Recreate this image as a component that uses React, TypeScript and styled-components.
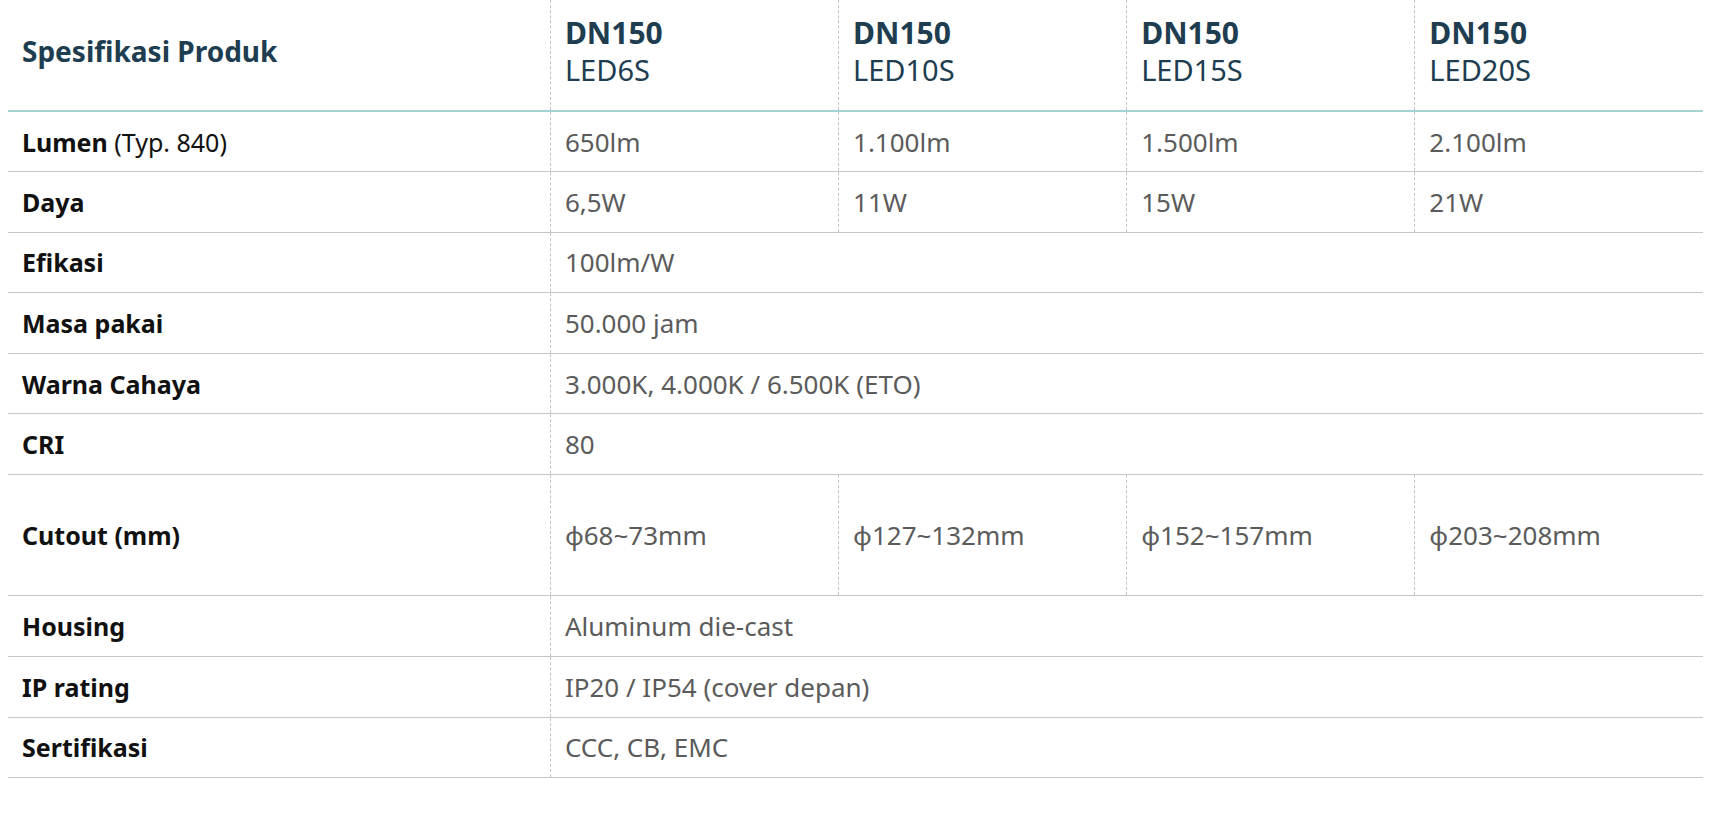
import styled, { createGlobalStyle } from "styled-components"

const GlobalStyle = createGlobalStyle`
    body {
        margin: 0 0 8px 8px;
        background: #ffffff;
        font-family: "Noto Sans", "Open Sans", Arial, sans-serif;
    }
`

const SpecTable = styled.table`
    width: 1695px;
    border-collapse: collapse;
    table-layout: fixed;
`

const Col = styled.col<{ $width: string }>`
    width: ${p => p.$width};
`

const HeadRow = styled.tr`
    border-bottom: 2px solid #a4d3d1;
`

const HeadCell = styled.th<{ $dashed?: boolean }>`
    text-align: left;
    vertical-align: middle;
    padding: 14px 14px 22px;
    font-weight: 400;
    color: #1e3d50;
    border-left: ${p => (p.$dashed ? "1px dashed #c4c4c4" : "none")};
`

const Title = styled.span`
    font-size: 28px;
    font-weight: 700;
    line-height: 37px;
`

const ModelName = styled.div`
    font-size: 30px;
    font-weight: 700;
    line-height: 37px;
`

const ModelCode = styled.div`
    font-size: 29px;
    line-height: 37px;
`

const Row = styled.tr<{ $tall?: boolean }>`
    height: ${p => (p.$tall ? 121.3 : 60.6)}px;
    border-bottom: 1px solid #c6c6c6;
`

const LabelCell = styled.td`
    padding: 0 14px;
    font-size: 25px;
    font-weight: 700;
    color: #111111;
    vertical-align: middle;
`

const LabelNote = styled.span`
    font-weight: 400;
`

const ValueCell = styled.td`
    padding: 0 14px;
    font-size: 26px;
    color: #5b5b5b;
    vertical-align: middle;
    border-left: 1px dashed #c4c4c4;
`

const models = ["LED6S", "LED10S", "LED15S", "LED20S"]

type Spec = {
    label: string
    note?: string
    values: string[]
    tall?: boolean
}

const specs: Spec[] = [
    { label: "Lumen", note: "(Typ. 840)", values: ["650lm", "1.100lm", "1.500lm", "2.100lm"] },
    { label: "Daya", values: ["6,5W", "11W", "15W", "21W"] },
    { label: "Efikasi", values: ["100lm/W"] },
    { label: "Masa pakai", values: ["50.000 jam"] },
    { label: "Warna Cahaya", values: ["3.000K, 4.000K / 6.500K (ETO)"] },
    { label: "CRI", values: ["80"] },
    { label: "Cutout (mm)", values: ["ϕ68~73mm", "ϕ127~132mm", "ϕ152~157mm", "ϕ203~208mm"], tall: true },
    { label: "Housing", values: ["Aluminum die-cast"] },
    { label: "IP rating", values: ["IP20 / IP54 (cover depan)"] },
    { label: "Sertifikasi", values: ["CCC, CB, EMC"] },
]

const App = () => {
    return <>
        <GlobalStyle />
        <SpecTable>
            <colgroup>
                <Col $width="32%" />
                <Col $width="17%" />
                <Col $width="17%" />
                <Col $width="17%" />
                <Col $width="17%" />
            </colgroup>
            <thead>
                <HeadRow>
                    <HeadCell><Title>Spesifikasi Produk</Title></HeadCell>
                    {models.map(m => (
                        <HeadCell key={m} $dashed>
                            <ModelName>DN150</ModelName>
                            <ModelCode>{m}</ModelCode>
                        </HeadCell>
                    ))}
                </HeadRow>
            </thead>
            <tbody>
                {specs.map(s => (
                    <Row key={s.label} $tall={s.tall}>
                        <LabelCell>
                            {s.label}
                            {s.note && <LabelNote> {s.note}</LabelNote>}
                        </LabelCell>
                        {s.values.length === 1
                            ? <ValueCell colSpan={4}>{s.values[0]}</ValueCell>
                            : s.values.map((v, i) => <ValueCell key={i}>{v}</ValueCell>)}
                    </Row>
                ))}
            </tbody>
        </SpecTable>
    </>
}

export default App
